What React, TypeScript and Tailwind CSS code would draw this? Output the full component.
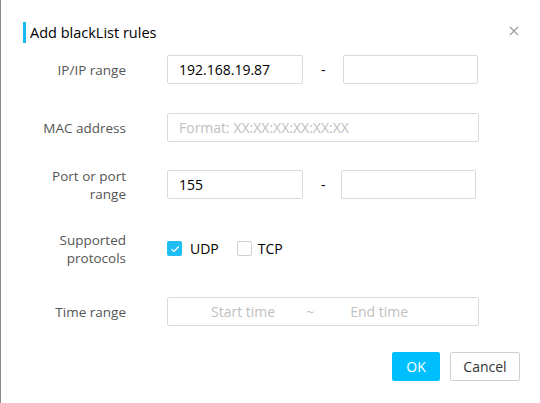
import React from "react";

const font = { fontFamily: '"Open Sans", "Noto Sans", sans-serif' };

function Label({ children }: { children: React.ReactNode }) {
  return (
    <div className="w-[125px] shrink-0 text-right text-[13.5px] leading-[18px] text-[#555]">
      {children}
    </div>
  );
}

function Input({ w, value, placeholder }: { w: string; value?: string; placeholder?: string }) {
  return (
    <div
      className={`${w} h-[29px] shrink-0 border border-[#d9d9d9] rounded-[2px] bg-white flex items-center pl-[11px] text-[14px]`}
    >
      {value ? (
        <span className="text-black">{value}</span>
      ) : (
        <span className="text-[#c0c0c0]">{placeholder}</span>
      )}
    </div>
  );
}

export default function App() {
  return (
    <div
      className="w-[540px] h-[403px] bg-white border-l border-[#8a8a8a] relative overflow-hidden"
      style={font}
    >
      <div className="flex items-center pt-[22px] pl-[22px]">
        <div className="w-[3px] h-[21px] bg-[#1ab8f2]" />
        <div className="ml-[4px] text-[14.5px] leading-[21px] text-black">Add blackList rules</div>
      </div>
      <svg
        className="absolute left-[508px] top-[26px]"
        width="10"
        height="10"
        viewBox="0 0 10 10"
      >
        <path d="M1 1L9 9M9 1L1 9" stroke="#9a9a9a" strokeWidth="1.1" />
      </svg>

      <div className="flex items-center h-[29px] mt-[12px]">
        <Label>IP/IP range</Label>
        <div className="ml-[41px] flex items-center">
          <Input w="w-[136px]" value="192.168.19.87" />
          <span className="ml-[18px] mr-[17px] text-[14px] text-black">-</span>
          <Input w="w-[135px]" />
        </div>
      </div>

      <div className="flex items-center h-[29px] mt-[29px]">
        <Label>MAC address</Label>
        <div className="ml-[41px]">
          <Input w="w-[312px]" placeholder="Format: XX:XX:XX:XX:XX:XX" />
        </div>
      </div>

      <div className="flex items-center h-[29px] mt-[28px]">
        <Label>
          Port or port
          <br />
          range
        </Label>
        <div className="ml-[41px] flex items-center">
          <Input w="w-[136px]" value="155" />
          <span className="ml-[18px] mr-[15px] text-[14px] text-black">-</span>
          <Input w="w-[135px]" />
        </div>
      </div>

      <div className="flex items-center h-[29px] mt-[35px]">
        <Label>
          Supported
          <br />
          protocols
        </Label>
        <div className="ml-[41px] flex items-center text-[14px] text-black">
          <div className="w-[15px] h-[15px] rounded-[2px] bg-[#1ebef5] flex items-center justify-center">
            <svg width="10" height="10" viewBox="0 0 10 10">
              <path d="M1.5 5.2L4 7.5L8.7 2.5" fill="none" stroke="white" strokeWidth="1.2" />
            </svg>
          </div>
          <span className="ml-[8px]">UDP</span>
          <div className="ml-[18px] w-[15px] h-[15px] rounded-[2px] border border-[#cfcfcf] bg-white" />
          <span className="ml-[6px]">TCP</span>
        </div>
      </div>

      <div className="flex items-center h-[29px] mt-[34px]">
        <Label>Time range</Label>
        <div className="ml-[41px] w-[312px] h-[29px] border border-[#d9d9d9] rounded-[2px] flex items-center text-[14px] text-[#c0c0c0]">
          <span className="ml-[43px]">Start time</span>
          <span className="ml-[31px]">~</span>
          <span className="ml-[36px]">End time</span>
        </div>
      </div>

      <div className="flex justify-end mt-[26px] pr-[20px]">
        <button className="w-[48px] h-[29px] rounded-[2px] bg-[#00bfff] text-white text-[14px]">
          OK
        </button>
        <button className="ml-[10px] w-[70px] h-[29px] rounded-[2px] border border-[#d0d0d0] bg-white text-[#333] text-[14px]">
          Cancel
        </button>
      </div>
    </div>
  );
}
